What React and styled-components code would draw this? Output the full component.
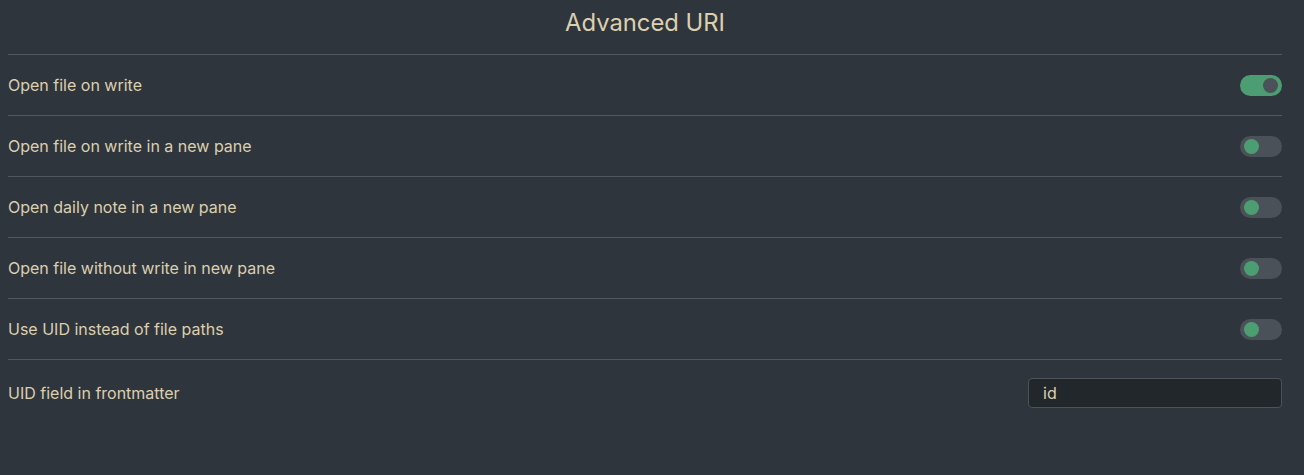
import React, { useState } from 'react';
import styled, { createGlobalStyle } from 'styled-components';

const GlobalStyle = createGlobalStyle`
  html, body {
    margin: 0;
    padding: 0;
    background-color: #2f353d;
  }
  body {
    font-family: Inter, "Noto Sans", "Liberation Sans", sans-serif;
    color: #dccfae;
  }
`;

const Page = styled.div`
  width: 1304px;
  height: 475px;
  padding: 0 22px 0 8px;
  box-sizing: border-box;
  background-color: #2f353d;
`;

const Title = styled.h2`
  margin: 0;
  height: 54px;
  display: flex;
  align-items: center;
  justify-content: center;
  padding-bottom: 10px;
  box-sizing: border-box;
  font-size: 23.8px;
  font-weight: 400;
  color: #dccfae;
`;

const Row = styled.div`
  display: flex;
  align-items: center;
  justify-content: space-between;
  height: ${(p) => (p.tall ? '67px' : '61px')};
  border-top: 1px solid #50575f;
  box-sizing: border-box;
`;

const Label = styled.div`
  font-size: 16px;
  color: #dccfae;
`;

const Track = styled.button`
  position: relative;
  width: 42px;
  height: 21px;
  border: none;
  border-radius: 11px;
  padding: 0;
  cursor: pointer;
  background-color: ${(p) => (p.on ? '#4c9e72' : '#4b5159')};
`;

const Knob = styled.span`
  position: absolute;
  top: 3px;
  left: ${(p) => (p.on ? '23px' : '4px')};
  width: 15px;
  height: 15px;
  border-radius: 50%;
  background-color: ${(p) => (p.on ? '#4b5159' : '#4c9e72')};
`;

const TextInput = styled.input`
  width: 254px;
  height: 30px;
  box-sizing: border-box;
  padding: 0 14px;
  border: 1px solid #4c535b;
  border-radius: 4px;
  background-color: #22272b;
  color: #dccfae;
  font-family: Inter, "Noto Sans", "Liberation Sans", sans-serif;
  font-size: 16px;
  outline: none;
`;

const Toggle = ({ initial }) => {
  const [on, setOn] = useState(initial);
  return (
    <Track on={on ? 1 : 0} onClick={() => setOn(!on)}>
      <Knob on={on ? 1 : 0} />
    </Track>
  );
};

const settings = [
  { label: 'Open file on write', on: true },
  { label: 'Open file on write in a new pane', on: false },
  { label: 'Open daily note in a new pane', on: false },
  { label: 'Open file without write in new pane', on: false },
  { label: 'Use UID instead of file paths', on: false },
];

export default function App() {
  const [uidField, setUidField] = useState('id');

  return (
    <Page>
      <GlobalStyle />
      <Title>Advanced URI</Title>
      {settings.map((s) => (
        <Row key={s.label}>
          <Label>{s.label}</Label>
          <Toggle initial={s.on} />
        </Row>
      ))}
      <Row tall>
        <Label>UID field in frontmatter</Label>
        <TextInput value={uidField} onChange={(e) => setUidField(e.target.value)} />
      </Row>
    </Page>
  );
}
